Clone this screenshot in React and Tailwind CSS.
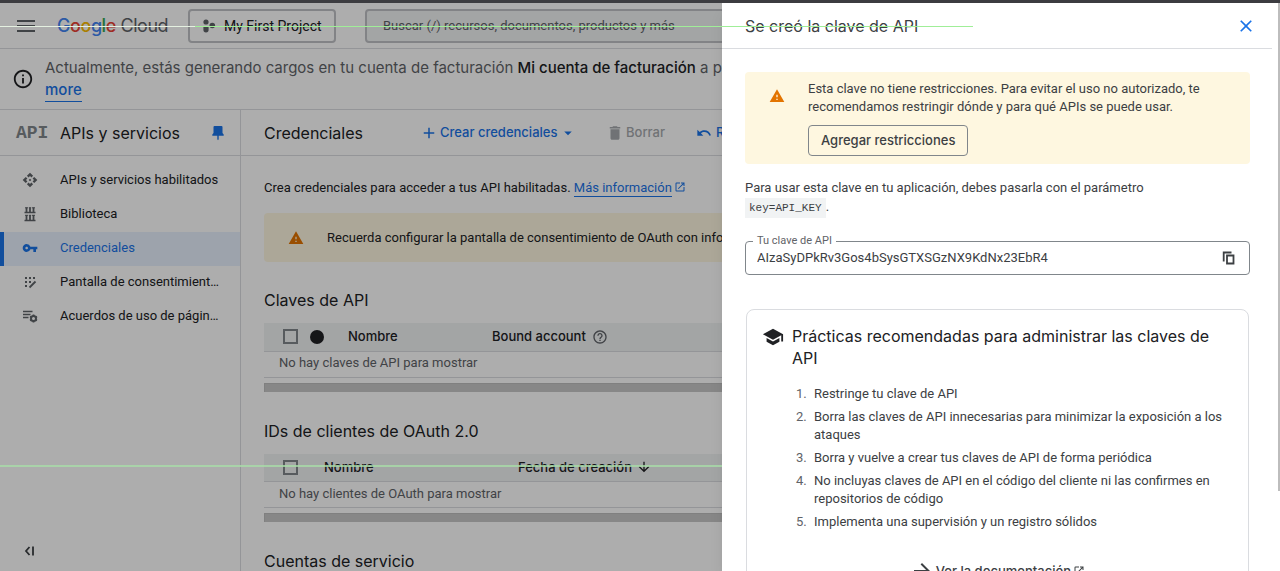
import {
  MdAdd, MdApi, MdAppRegistration, MdArrowDownward, MdArrowDropDown, MdArrowForward, MdClose,
  MdDelete, MdHelpOutline, MdInfoOutline, MdMenu, MdOpenInNew, MdSchool, MdUndo, MdVpnKey, MdWarning,
} from "react-icons/md";

const display = "font-['Inter','Liberation_Sans',sans-serif]";

function LibraryIcon() {
  return (
    <svg viewBox="0 0 16 16" className="size-4" fill="none" stroke="currentColor" aria-hidden="true">
      <path d="M2.500 6.500h11M2.500 14.500h11" strokeWidth="1.400" />
      <path d="M4.500 1.500v5M8 1.500v5M11.500 1.500v5M4.500 9v5.500M8 9v5.500M11.500 9v5.500" strokeWidth="1.800" />
      <path d="M3 1.800h3M6.800 1.800h2.400M10 1.800h3M3 9.300h3M6.800 9.300h2.400M10 9.300h3" strokeWidth="1" />
    </svg>
  );
}

function AgreementIcon() {
  return (
    <svg viewBox="0 0 16 16" className="size-4" aria-hidden="true">
      <path d="M1 3.500h9.500M1 6.500h7.500M1 9.500h5.500" stroke="currentColor" strokeWidth="1.400" fill="none" />
      <circle cx="11.500" cy="10.500" r="2.500" fill="none" stroke="currentColor" strokeWidth="2" />
      <path d="M11.500 6.500v1.500M11.500 13v1.500M8 8.500l1.300.800M13.700 11.700l1.300.800M8 12.500l1.300-.800M13.700 9.300L15 8.500" stroke="currentColor" strokeWidth="1.800" />
    </svg>
  );
}

function ConsentIcon() {
  return (
    <svg viewBox="0 0 16 16" className="size-4" aria-hidden="true">
      <path d="M3 3h2v2H3zM7 3h2v2H7zM11 3h2v2h-2zM3 7h2v2H3zM7 7h2v2H7zM3 11h2v2H3z" fill="currentColor" />
      <path d="M7.500 13.500l6-6" stroke="currentColor" strokeWidth="1.800" />
    </svg>
  );
}

function PinIcon() {
  return (
    <svg viewBox="0 0 12 16" className="h-4 w-3" fill="currentColor" aria-hidden="true">
      <path d="M2.500 1h7a1 1 0 0 1 1 1v6l1.200 1.400v1.400H6.700v3.400L6 15.200l-.700-1v-3.400H.300V9.400L1.500 8V2a1 1 0 0 1 1-1z" />
    </svg>
  );
}

function ProjectIcon() {
  return (
    <svg viewBox="0 0 14 14" className="size-3.5 text-[#5f6368]" fill="currentColor" aria-hidden="true">
      <circle cx="4" cy="3" r="2.600" />
      <circle cx="10.300" cy="6.500" r="2.800" />
      <path d="M1.400 7.500h5.200v3.300a2.600 2.600 0 0 1-5.200 0z" />
    </svg>
  );
}

function CopyIcon() {
  return (
    <svg viewBox="0 0 14 14" className="size-3.5" fill="none" stroke="currentColor" strokeWidth="1.800" aria-hidden="true">
      <path d="M1.700 10.500V1.500H9.500" />
      <path d="M5 4.500h6.500v8H5z" />
    </svg>
  );
}

const navItems = [
  { label: "APIs y servicios habilitados", icon: <MdApi className="size-4" /> },
  { label: "Biblioteca", icon: <LibraryIcon /> },
  { label: "Credenciales", icon: <MdVpnKey className="size-4" />, active: true },
  { label: "Pantalla de consentimiento de OAuth", icon: <ConsentIcon /> },
  { label: "Acuerdos de uso de páginas", icon: <AgreementIcon /> },
];

function Header() {
  return (
    <header className="flex h-[46px] shrink-0 items-center border-b border-[#dadce0] pl-[14px]">
      <button type="button" aria-label="Menú de navegación" className="text-[#5f6368]">
        <MdMenu className="size-6" />
      </button>
      <a href="#inicio" className={`${display} ml-[19px] w-[131px] text-lg tracking-tight whitespace-nowrap text-[#5f6368]`}>
        <span className="font-medium">
          <span className="text-[#4285f4]">G</span>
          <span className="text-[#ea4335]">o</span>
          <span className="text-[#fbbc04]">o</span>
          <span className="text-[#4285f4]">g</span>
          <span className="text-[#34a853]">l</span>
          <span className="text-[#ea4335]">e</span>
        </span>{" "}
        Cloud
      </a>
      <button type="button" className="flex h-[34px] w-[148px] shrink-0 items-center gap-2 rounded border-2 border-[#c0c2c6] pl-3 text-sm whitespace-nowrap text-[#202124]">
        <ProjectIcon />
        My First Project
      </button>
      <input
        type="search"
        aria-label="Buscar"
        placeholder="Buscar (/) recursos, documentos, productos y más"
        className="ml-[29px] h-[34px] min-w-0 flex-1 rounded border-2 border-[#c0c2c6] bg-[#f1f3f4] px-4 text-[13px] placeholder:text-[#5f6368]"
      />
    </header>
  );
}

function BillingBanner() {
  return (
    <div className="flex h-[61px] shrink-0 items-center gap-[11px] border-b border-[#dadce0] pl-3">
      <MdInfoOutline className="size-[22px] shrink-0 text-[#202124]" />
      <p className={`${display} text-[15px] leading-[22px] whitespace-nowrap text-[#5f6368]`}>
        Actualmente, estás generando cargos en tu cuenta de facturación{" "}
        <b className="font-medium text-[#202124]">Mi cuenta de facturación</b> a partir de los recursos
        <br />
        <a href="#more" className="border-b border-[#1a73e8] pb-0.5 font-medium text-[#1a73e8]">more</a>
      </p>
    </div>
  );
}

function Sidebar() {
  return (
    <aside className="flex w-[241px] shrink-0 flex-col border-r border-[#dadce0]">
      <div className="flex h-[46px] items-center border-b border-[#dadce0] pr-4 pl-4">
        <span aria-hidden="true" className="w-11 font-['Liberation_Mono',monospace] text-lg font-bold text-[#80868b]">API</span>
        <h2 className={`${display} flex-1 text-base text-[#202124]`}>APIs y servicios</h2>
        <button type="button" aria-label="Fijar menú" className="text-[#1a73e8]">
          <PinIcon />
        </button>
      </div>
      <nav className="flex flex-col pt-2">
        {navItems.map((item) => (
          <a
            key={item.label}
            href="#nav"
            className={`flex h-[34px] items-center gap-[22px] border-l-4 pr-5 pb-0.5 pl-[18px] text-[13px] ${item.active ? "border-[#1a73e8] bg-[#e8f0fe] text-[#1a73e8]" : "border-transparent text-[#202124]"}`}
          >
            <span className={`shrink-0 ${item.active ? "" : "text-[#5f6368]"}`}>{item.icon}</span>
            <span className="truncate">{item.label}</span>
          </a>
        ))}
      </nav>
      <button type="button" aria-label="Contraer menú" className="mt-auto flex h-10 w-fit items-center pl-6 text-[#3c4043]">
        <svg viewBox="0 0 12 12" className="size-3" fill="none" stroke="currentColor" strokeWidth="1.800" aria-hidden="true">
          <path d="M5.500 2L2 6l3.500 4M9 1.500v9" />
        </svg>
      </button>
    </aside>
  );
}

function SelectBox({ label }) {
  return <input type="checkbox" aria-label={label} className="block size-[15px] appearance-none border-2 border-[#80868b]" />;
}

function CredentialTable({ title, children, empty, columns }) {
  return (
    <section className="mb-[27px]">
      <h2 className={`${display} mb-[11px] text-base leading-6 text-[#202124]`}>{title}</h2>
      <table className="w-full table-fixed text-left text-[13px]">
        <thead>
          <tr className={`${display} h-7 border-b border-[#dadce0] bg-[#f1f3f4] text-[#202124]`}>{children}</tr>
        </thead>
        <tbody>
          <tr className="h-[26px] border-b border-[#dadce0] text-[#5f6368]">
            <td colSpan={columns} className="pb-0.5 pl-[15px] text-[13px] leading-5">{empty}</td>
          </tr>
        </tbody>
      </table>
      <div className="mt-[5px] h-[9px] border-t border-l border-[#bdbdbd] bg-[#c8c8c8]" />
    </section>
  );
}

function Main() {
  return (
    <main className="min-w-0 flex-1 overflow-hidden">
      <div className={`${display} flex h-[46px] items-center border-b border-[#dadce0] pl-[23px] text-[13px] font-medium whitespace-nowrap`}>
        <h1 className="w-[156px] text-base font-normal text-[#202124]">Credenciales</h1>
        <button type="button" className="flex w-[186px] items-center gap-0.5 text-[#1a73e8]">
          <MdAdd className="size-[18px]" />
          Crear credenciales
          <MdArrowDropDown className="size-[18px]" />
        </button>
        <button type="button" disabled className="flex w-[90px] items-center gap-0.5 text-[#a6a9ad]">
          <MdDelete className="size-[18px]" />
          Borrar
        </button>
        <button type="button" className="flex items-center gap-1 text-[#1a73e8]">
          <MdUndo className="size-4" />
          Restablecer credenciales borradas
        </button>
      </div>
      <div className="pt-[22px] pl-[23px]">
        <p className="text-[13px] leading-5 text-[#202124]">
          Crea credenciales para acceder a tus API habilitadas.{" "}
          <a href="#info" className="text-[#1a73e8]">
            <span className="border-b border-[#1a73e8] pb-px">Más información</span>
            <MdOpenInNew className="ml-0.5 inline size-3 align-[-1px]" />
          </a>
        </p>
        <div role="alert" className="mt-[15px] flex h-[49px] items-center rounded-l bg-[#fef7e0] pl-6 text-[13px] whitespace-nowrap text-[#202124]">
          <MdWarning className="mr-[23px] size-4 shrink-0 text-[#e37400]" />
          Recuerda configurar la pantalla de consentimiento de OAuth con información sobre tu aplicación.
        </div>
        <div className="pt-[26px]">
          <CredentialTable title="Claves de API" empty="No hay claves de API para mostrar" columns={4}>
            <th className="w-[46px] pl-[19px]"><SelectBox label="Seleccionar todas las claves" /></th>
            <th className="w-[38px]"><span className="block size-3.5 rounded-full bg-[#202124]" /></th>
            <th className="w-[144px] font-medium">Nombre</th>
            <th className="font-medium">
              <span className="flex items-center gap-1.5">
                Bound account <MdHelpOutline className="size-4 text-[#5f6368]" />
              </span>
            </th>
          </CredentialTable>
          <CredentialTable title="IDs de clientes de OAuth 2.0" empty="No hay clientes de OAuth para mostrar" columns={3}>
            <th className="w-[60px] pl-[19px]"><SelectBox label="Seleccionar todos los clientes" /></th>
            <th className="w-[194px] font-medium">Nombre</th>
            <th className="font-medium">
              <span className="flex items-center gap-1">
                Fecha de creación <MdArrowDownward className="size-4" />
              </span>
            </th>
          </CredentialTable>
          <h2 className={`${display} text-base leading-6 text-[#202124]`}>Cuentas de servicio</h2>
        </div>
      </div>
    </main>
  );
}

const practices = [
  "Restringe tu clave de API",
  "Borra las claves de API innecesarias para minimizar la exposición a los ataques",
  "Borra y vuelve a crear tus claves de API de forma periódica",
  "No incluyas claves de API en el código del cliente ni las confirmes en repositorios de código",
  "Implementa una supervisión y un registro sólidos",
];

function Drawer() {
  return (
    <div role="dialog" aria-labelledby="drawer-title" className="absolute inset-y-0 right-0 w-[558px] max-w-full overflow-hidden bg-white pr-2 text-[13px] text-[#3c4043] shadow-lg">
      <div className="flex h-[46px] items-center justify-between border-b border-[#dadce0] pr-4 pl-[23px]">
        <h2 id="drawer-title" className={`${display} text-base`}>Se creó la clave de API</h2>
        <button type="button" aria-label="Cerrar" className="text-[#1a73e8]">
          <MdClose className="size-5" />
        </button>
      </div>
      <div className="pt-[23px] pr-[22px] pl-[23px]">
        <div role="alert" className="flex rounded bg-[#fef7e0] pt-2 pr-8 pb-2 pl-6">
          <MdWarning className="mt-2 mr-[23px] size-4 shrink-0 text-[#e37400]" />
          <div>
            <p className="leading-[18px]">
              Esta clave no tiene restricciones. Para evitar el uso no autorizado, te recomendamos restringir dónde y
              para qué APIs se puede usar.
            </p>
            <button type="button" className={`${display} mt-[9px] h-[31px] rounded border border-[#80868b] px-3 text-[13px] font-medium`}>
              Agregar restricciones
            </button>
          </div>
        </div>
        <p className="mt-[14px] leading-[19px]">
          Para usar esta clave en tu aplicación, debes pasarla con el parámetro{" "}
          <br />
          <code className="bg-[#f1f3f4] px-1 py-1 font-['Liberation_Mono',monospace] text-[11px]">key=API_KEY</code>.
        </p>
        <fieldset className="mt-[17px] flex h-[40px] items-center rounded border border-[#80868b] px-[11px] pb-1.5">
          <legend className="-ml-1 h-3 px-1 text-[11px] leading-3 text-[#5f6368]">
            <label htmlFor="api-key">Tu clave de API</label>
          </legend>
          <div className="flex w-full items-center">
            <input id="api-key" readOnly value="AIzaSyDPkRv3Gos4bSysGTXSGzNX9KdNx23EbR4" className="min-w-0 flex-1 outline-none" />
            <button type="button" aria-label="Copiar" className="pr-0.5">
              <CopyIcon />
            </button>
          </div>
        </fieldset>
        <section className="mx-px mt-[34px] rounded-lg border border-[#dadce0] px-[15px] pt-[15px] pb-6">
          <div className="flex gap-2">
            <MdSchool className="mt-px size-[22px] shrink-0 text-[#202124]" />
            <h3 className={`${display} text-base leading-[22px] text-[#202124]`}>
              Prácticas recomendadas para administrar las claves de API
            </h3>
          </div>
          <ol className="mt-4 ml-[34px] flex list-none flex-col gap-[5px]">
            {practices.map((text, i) => (
              <li key={text} className="flex leading-[18px]">
                <span className="w-[18px] shrink-0 text-[#5f6368]">{i + 1}.</span>
                <span>{text}</span>
              </li>
            ))}
          </ol>
          <a href="#docs" className={`${display} mt-7 flex items-center justify-center gap-0.5 text-[13px] leading-5 font-medium`}>
            <MdArrowForward className="size-6" />
            <span>Ver la documentación</span>
            <MdOpenInNew className="size-3" />
          </a>
        </section>
      </div>
      <div className="absolute top-0 right-0 h-[86%] w-0.5 bg-[#bdbdbd]" />
    </div>
  );
}

export default function App() {
  return (
    <div className="flex h-screen flex-col bg-white font-['Roboto','Liberation_Sans',sans-serif]">
      <div className="h-[3px] shrink-0 bg-[#3c3c40]" />
      <div className="relative flex min-h-0 flex-1 flex-col overflow-hidden">
        <Header />
        <BillingBanner />
        <div className="flex min-h-0 flex-1">
          <Sidebar />
          <Main />
        </div>
        <div className="absolute inset-0 bg-black/32" />
        <Drawer />
        <div aria-hidden="true" className="pointer-events-none absolute top-[23px] left-0 flex h-px w-[76%]">
          <span className="w-[20%] bg-[#e4f0e0]" />
          <span className="flex-1 bg-[#a0ee98]" />
        </div>
        <div aria-hidden="true" className="pointer-events-none absolute top-[462px] right-[558px] left-0 h-0.5 bg-[#a8dca8]/80" />
      </div>
    </div>
  );
}
